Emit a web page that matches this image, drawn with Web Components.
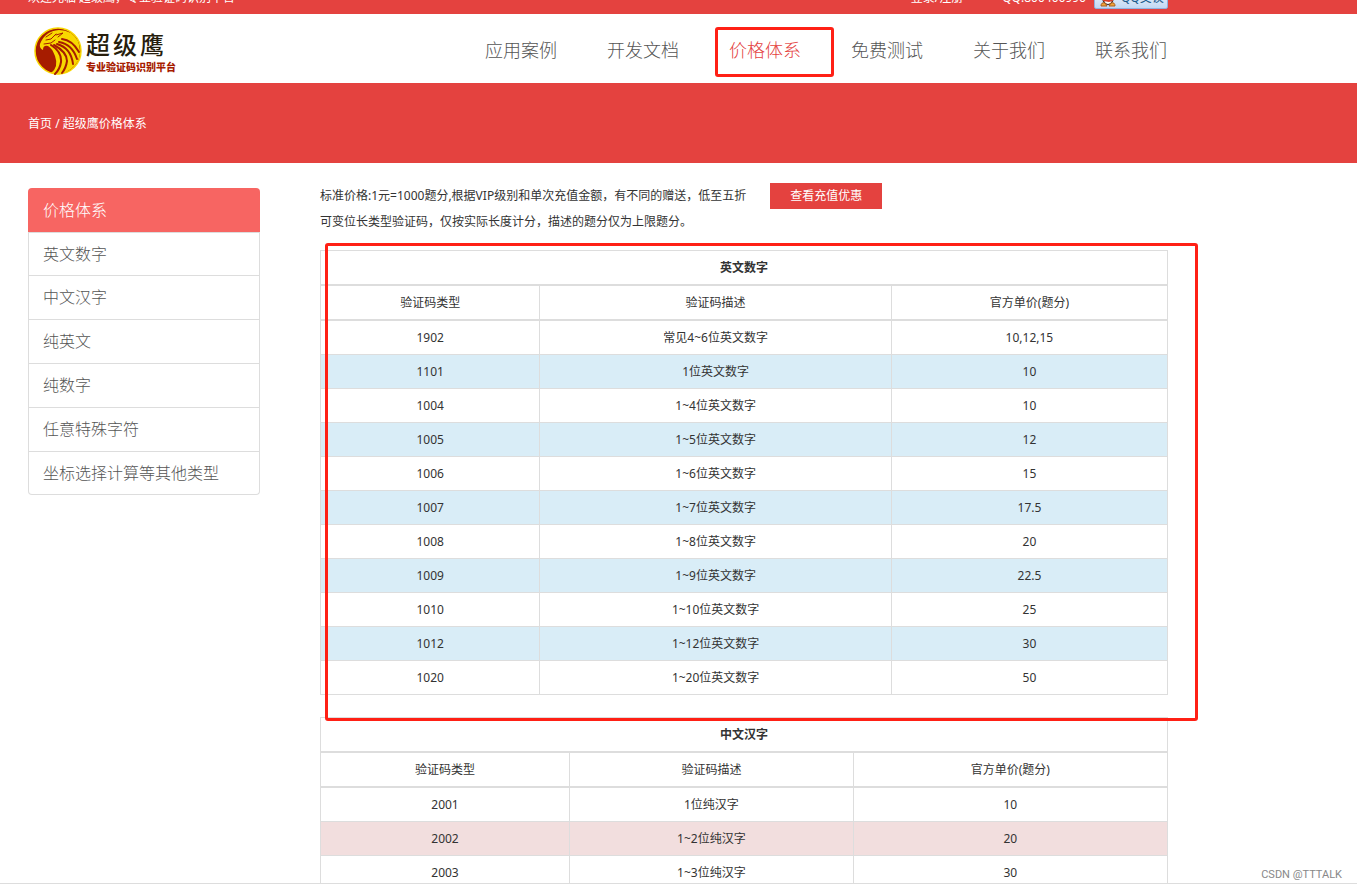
<!DOCTYPE html>
<html lang="zh-CN">
<head>
<meta charset="utf-8">
<title>超级鹰价格体系</title>
<style>
  body {
    margin: 0;
    background: #fff;
    color: #333;
    font: 12px/17px "Noto Sans", "Noto Sans CJK SC", sans-serif;
  }
</style>
</head>
<body>
<price-page></price-page>

<template id="top-bar">
  <style>
    :host { display: block; height: 14px; flex: none; overflow: hidden; background: #e4423f; color: #fff; }
    .row { display: flex; height: 14px; max-width: 1140px; margin: 0 28px; align-items: flex-end; line-height: 32px; white-space: nowrap; }
    .welcome { flex: 1; }
    a { color: inherit; text-decoration: none; }
    .login { margin-right: 39px; }
    .qq { margin-right: 8px; }
    .talk { display: flex; align-items: center; gap: 5px; box-sizing: border-box; width: 74px; height: 22px; margin-bottom: 5px; padding: 0 5px; border: 1px solid #8fb2e0; border-radius: 2px; background: linear-gradient(#f4f9ff, #c3d8f4); color: #1a5a8c; line-height: 20px; }
    svg { flex: none; }
  </style>
  <div class="row">
    <span class="welcome">欢迎光临 超级鹰，专业验证码识别平台</span>
    <a class="login" href="#">登录/注册</a>
    <span class="qq">QQ:800406996</span>
    <a class="talk" href="#"><svg width="16" height="18" viewBox="0 0 16 18"><ellipse cx="8" cy="8" rx="6" ry="8" fill="#3b2a28"/><ellipse cx="8" cy="10" rx="4" ry="5" fill="#fff"/><path d="M3 9l5 2 5-2v3l-4 1-6-1z" fill="#d8412c"/><path d="M1 17q0-4 4-3l2 3zM15 17q0-4-4-3l-2 3z" fill="#f2a33a" stroke="#a85f1c"/></svg>QQ交谈</a>
  </div>
</template>

<template id="brand-logo">
  <style>
    :host { display: block; }
    a { display: flex; align-items: center; gap: 4px; color: #261d0c; text-decoration: none; }
    .words { display: flex; flex-direction: column; white-space: nowrap; }
    .name { display: flex; gap: 3px; font: 500 24px/32px "Noto Sans CJK SC", sans-serif; }
    .tag { color: #a61c00; font: 900 10px/14px "Noto Sans CJK SC", sans-serif; }
  </style>
  <a href="#" aria-label="超级鹰">
    <svg width="48" height="48" viewBox="0 0 48 48">
      <circle cx="24" cy="24" r="23" fill="#a61c00" stroke="#f8d800" stroke-width="1.5"/>
      <path d="M6 17Q11 4 25 3Q38 3 44 14Q48 25 44 34Q38 44 27 47Q21 48 17 46Q25 40 21 29Q18 21 14 19Q9 18 9 23Q5 21 6 17Z" fill="#f8d800"/>
      <g fill="none" stroke="#a61c00" stroke-width="2" stroke-linecap="round">
        <path d="M17 18Q28 25 27 35Q26 42 21 47"/>
        <path d="M20 18Q33 25 33 34Q32 41 28 46"/>
        <path d="M23 17Q37 21 39 37"/>
        <path d="M25 15Q38 17 43 32"/>
        <path d="M28 12Q38 13 45 25"/>
        <path d="M12 13l5-1 5-5M10 17l7-1 4-3M18 6l-6 4" stroke-width="1"/>
        <path d="M22 8l7-2-5 4" stroke-width="1"/>
      </g>
    </svg>
    <span class="words"><span class="name"><span>超</span><span>级</span><span>鹰</span></span><span class="tag">专业验证码识别平台</span></span>
  </a>
</template>

<template id="nav-item">
  <style>
    :host { display: block; position: relative; }
    a { display: block; color: #555; font-size: 18px; font-weight: 300; line-height: 26px; white-space: nowrap; text-decoration: none; }
    :host([active]) a { color: #e4423f; }
    :host([active])::after { content: ""; position: absolute; inset: -10px -33px -14px -14px; border: 3px solid #ff2015; border-radius: 3px; pointer-events: none; }
  </style>
  <a href="#"><slot></slot></a>
</template>

<template id="site-header">
  <style>
    :host { display: block; flex: none; }
    .row { display: flex; align-items: center; justify-content: space-between; box-sizing: border-box; height: 69px; max-width: 1140px; margin: 0 28px; padding: 0 1px 0 6px; }
    nav { display: flex; gap: 50px; padding-top: 2px; }
    brand-logo { padding-top: 5px; }
  </style>
  <div class="row">
    <brand-logo></brand-logo>
    <nav>
      <nav-item>应用案例</nav-item>
      <nav-item>开发文档</nav-item>
      <nav-item active>价格体系</nav-item>
      <nav-item>免费测试</nav-item>
      <nav-item>关于我们</nav-item>
      <nav-item>联系我们</nav-item>
    </nav>
  </div>
</template>

<template id="page-banner">
  <style>
    :host { display: flex; align-items: center; flex: none; height: 80px; padding: 0 28px; background: #e4423f; color: #fff; }
    a { color: inherit; text-decoration: none; }
  </style>
  <div><a href="#">首页</a> / <slot></slot></div>
</template>

<template id="side-menu">
  <style>
    :host { display: block; }
    nav { display: flex; flex-direction: column; }
    a { padding: 8px 14px 9px; border: 1px solid #ddd; border-top: 0; color: #555; font-size: 16px; font-weight: 300; line-height: 26px; text-decoration: none; }
    a:first-child { padding: 9px 15px; border: 0; border-radius: 4px 4px 0 0; background: #f76562; color: #fff; }
    a:nth-child(2) { border-top: 1px solid #ddd; padding-top: 8px; padding-bottom: 8px; }
    a:last-child { padding-bottom: 8px; border-radius: 0 0 4px 4px; }
  </style>
  <nav>
    <a href="#" aria-current="page">价格体系</a>
    <a href="#">英文数字</a>
    <a href="#">中文汉字</a>
    <a href="#">纯英文</a>
    <a href="#">纯数字</a>
    <a href="#">任意特殊字符</a>
    <a href="#">坐标选择计算等其他类型</a>
  </nav>
</template>

<template id="price-note">
  <style>
    :host { display: block; line-height: 26px; }
    .line { display: flex; gap: 24px; white-space: nowrap; }
    a { padding: 0 20px; background: #e4423f; color: #fff; text-decoration: none; }
  </style>
  <div class="line"><span>标准价格:1元=1000题分,根据VIP级别和单次充值金额，有不同的赠送，低至五折</span><a href="#">查看充值优惠</a></div>
  <div>可变位长类型验证码，仅按实际长度计分，描述的题分仅为上限题分。</div>
</template>

<template id="price-table">
  <style>
    :host { display: block; position: relative; }
    :host([marked]) { z-index: 1; }
    table { width: 100%; border-collapse: collapse; table-layout: fixed; text-align: center; }
    th, td { height: 17px; padding: 8px; border: 1px solid #ddd; font-weight: 400; }
    thead th { border-bottom-width: 2px; }
    .title { font-weight: 700; }
    .shade td { background: var(--shade); }
    :host([marked])::after { content: ""; position: absolute; inset: -7px -30px -26px 5px; border: 3px solid #ff2015; border-radius: 3px; pointer-events: none; }
  </style>
  <table>
    <colgroup></colgroup>
    <thead>
      <tr><th class="title" colspan="3"></th></tr>
      <tr><th>验证码类型</th><th>验证码描述</th><th>官方单价(题分)</th></tr>
    </thead>
    <tbody></tbody>
  </table>
</template>

<template id="price-page">
  <style>
    :host { display: flex; flex-direction: column; position: relative; box-sizing: border-box; height: 100vh; padding-bottom: 4px; overflow: hidden; }
    main { flex: 1; min-height: 0; overflow: hidden; border-bottom: 1px solid #ddd; }
    .grid { display: grid; grid-template-columns: 232px minmax(0, 1fr); gap: 60px; max-width: 1140px; margin: 0 28px; }
    side-menu { margin-top: 25px; }
    .content { display: flex; flex-direction: column; padding-top: 20px; }
    price-note { margin-bottom: 15px; }
    price-table { margin-bottom: 22px; }
    .blue { --shade: #d9edf7; }
    .pink { --shade: #f2dede; }
    .mark { position: absolute; right: 15px; bottom: 5px; color: #888; font: 11px/17px Roboto, sans-serif; }
  </style>
  <top-bar></top-bar>
  <site-header></site-header>
  <page-banner>超级鹰价格体系</page-banner>
  <main>
    <div class="grid">
      <side-menu></side-menu>
      <div class="content">
        <price-note></price-note>
        <price-table class="blue" marked heading="英文数字" columns="25.9,41.5,32.6" rows="1902|常见4~6位英文数字|10,12,15;1101|1位英文数字|10;1004|1~4位英文数字|10;1005|1~5位英文数字|12;1006|1~6位英文数字|15;1007|1~7位英文数字|17.5;1008|1~8位英文数字|20;1009|1~9位英文数字|22.5;1010|1~10位英文数字|25;1012|1~12位英文数字|30;1020|1~20位英文数字|50"></price-table>
        <price-table class="pink" heading="中文汉字" columns="29.4,33.5,37.1" rows="2001|1位纯汉字|10;2002|1~2位纯汉字|20;2003|1~3位纯汉字|30"></price-table>
      </div>
    </div>
  </main>
  <span class="mark">CSDN @TTTALK</span>
</template>

<script>
  class TemplateElement extends HTMLElement {
    constructor() {
      super();
      this.attachShadow({ mode: "open" })
        .append(document.getElementById(this.localName).content.cloneNode(true));
    }
  }

  class PriceTable extends TemplateElement {
    connectedCallback() {
      const root = this.shadowRoot;
      root.querySelector(".title").textContent = this.getAttribute("heading");
      root.querySelector("colgroup").replaceChildren(
        ...this.getAttribute("columns").split(",").map((share) => {
          const col = document.createElement("col");
          col.style.width = share + "%";
          return col;
        }));
      root.querySelector("tbody").replaceChildren(
        ...this.getAttribute("rows").split(";").map((line, index) => {
          const row = document.createElement("tr");
          if (index % 2) row.className = "shade";
          for (const text of line.split("|")) row.insertCell().textContent = text;
          return row;
        }));
    }
  }

  for (const name of ["top-bar", "brand-logo", "nav-item", "site-header", "page-banner", "side-menu", "price-note"]) {
    customElements.define(name, class extends TemplateElement {});
  }
  customElements.define("price-table", PriceTable);
  customElements.define("price-page", class extends TemplateElement {});
</script>
</body>
</html>
